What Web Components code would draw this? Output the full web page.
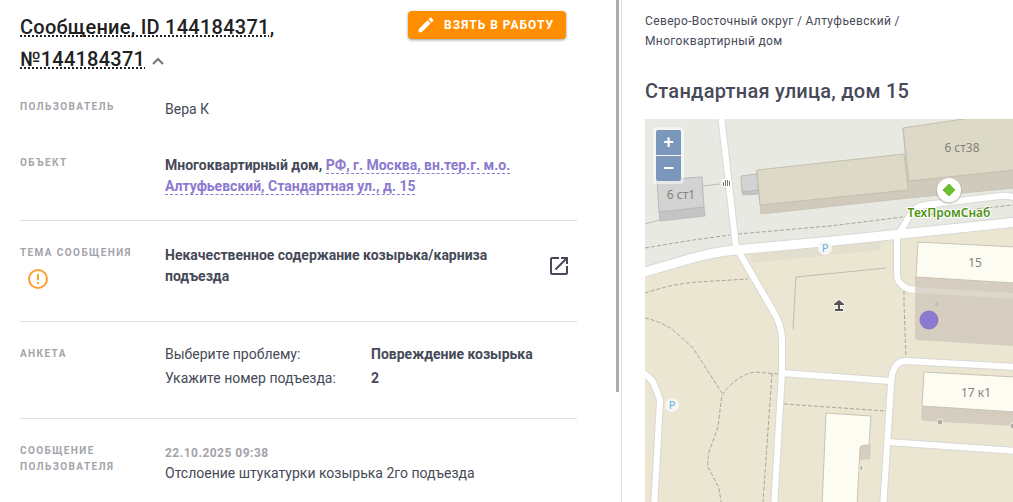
<!DOCTYPE html>
<html lang="ru">
<head>
<meta charset="utf-8">
<meta name="viewport" content="width=device-width, initial-scale=1">
<title>Сообщение, ID 144184371</title>
<style>
    body {
        margin: 0;
        font-family: Roboto, "Liberation Sans", sans-serif;
        font-size: 14px;
        line-height: 21px;
        color: #464a58;
        background: #fff;
    }
</style>
</head>
<body>
<message-page>
    <message-details slot="main"></message-details>
    <object-panel slot="side"></object-panel>
</message-page>

<script>
class MessagePage extends HTMLElement {
    connectedCallback() {
        this.attachShadow({ mode: 'open' });
        this.shadowRoot.innerHTML = `
            <style>
                :host {
                    display: grid;
                    grid-template-columns: minmax(0, 35fr) minmax(0, 22fr);
                    height: 100vh;
                    overflow: hidden;
                }

                main {
                    display: flex;
                    min-height: 0;
                    border-right: 1px solid #e0e0e0;
                }

                .scroll {
                    flex: 1;
                    overflow: auto;
                    scrollbar-width: none;
                }

                .track {
                    width: 3px;
                    margin-right: 2px;
                }

                .thumb {
                    height: 78%;
                    background: #acacb1;
                }

                aside {
                    min-height: 0;
                    overflow: hidden;
                }
            </style>
            <main>
                <div class="scroll"><slot name="main"></slot></div>
                <div class="track"><div class="thumb"></div></div>
            </main>
            <aside><slot name="side"></slot></aside>
        `;
    }
}

class ActionButton extends HTMLElement {
    connectedCallback() {
        this.attachShadow({ mode: 'open' });
        this.shadowRoot.innerHTML = `
            <style>
                :host {
                    display: block;
                    flex: none;
                }

                button {
                    display: flex;
                    align-items: center;
                    gap: 8px;
                    height: 28px;
                    padding: 0 12px 0 8px;
                    border: none;
                    border-radius: 4px;
                    background: #ff8f00;
                    color: #fff;
                    font: 700 12px/28px Roboto, "Liberation Sans", sans-serif;
                    letter-spacing: 1px;
                    text-transform: uppercase;
                    box-shadow: 0 1px 3px rgba(0, 0, 0, 0.4);
                    cursor: pointer;
                }
            </style>
            <button type="button">
                <svg width="20" height="18" viewBox="0 0 24 22" fill="#fff" aria-hidden="true">
                    <path d="M3 16.25V20h3.750L17.810 8.940l-3.750-3.750L3 16.250zM20.710 6.040c.39-.39.39-1.020 0-1.410l-2.340-2.340a.996.996 0 0 0-1.410 0l-1.830 1.830 3.750 3.750 1.830-1.830z"/>
                </svg>
                <slot></slot>
            </button>
        `;
    }
}

class DetailRow extends HTMLElement {
    connectedCallback() {
        const label = this.getAttribute('label');

        this.attachShadow({ mode: 'open' });
        this.shadowRoot.innerHTML = `
            <style>
                :host {
                    display: grid;
                    grid-template-columns: 145px minmax(0, 1fr);
                    padding-bottom: 23px;
                }

                :host([divided]) {
                    padding-top: 24px;
                    padding-bottom: 30px;
                    border-top: 1px solid #dfdfe0;
                }

                .label {
                    color: #a3a4aa;
                    font-size: 10px;
                    font-weight: 700;
                    line-height: 16px;
                    letter-spacing: 0.14em;
                    text-transform: uppercase;
                }
            </style>
            <div>
                <div class="label">${label}</div>
                <slot name="icon"></slot>
            </div>
            <div><slot></slot></div>
        `;
    }
}

class MessageDetails extends HTMLElement {
    connectedCallback() {
        this.attachShadow({ mode: 'open' });
        this.shadowRoot.innerHTML = `
            <style>
                :host {
                    display: block;
                    padding: 11px 39px 24px 20px;
                }

                header {
                    display: flex;
                    align-items: flex-start;
                    justify-content: space-between;
                    gap: 24px;
                    padding-right: 11px;
                    margin-bottom: 24px;
                }

                h1 {
                    margin: 0;
                    color: #212121;
                    font-size: 20px;
                    font-weight: 500;
                    line-height: 32px;
                    letter-spacing: 0.0125em;
                }

                abbr {
                    text-decoration: underline dotted;
                    text-decoration-skip-ink: none;
                }

                .toggle {
                    padding: 0;
                    border: none;
                    background: none;
                    cursor: pointer;
                }

                detail-row.user {
                    padding-bottom: 35px;
                }

                strong {
                    font-weight: 700;
                }

                a {
                    color: #8c79d0;
                    text-decoration: none;
                    border-bottom: 1px dashed #8c79d0;
                }

                .theme {
                    display: flex;
                    align-items: center;
                    justify-content: space-between;
                }

                .open {
                    flex: none;
                    width: 36px;
                    height: 36px;
                    padding: 6px;
                    border: none;
                    background: none;
                    cursor: pointer;
                }

                svg {
                    display: block;
                }

                .toggle svg {
                    display: inline-block;
                }

                .warning {
                    margin: 6px 0 0 6px;
                }

                dl {
                    display: grid;
                    grid-template-columns: 1fr 1fr;
                    row-gap: 8px;
                    margin: 0 0 2px;
                    line-height: 16px;
                }

                dd {
                    margin: 0;
                    font-weight: 700;
                }

                time {
                    display: block;
                    color: #a3a4aa;
                    font-size: 12px;
                    font-weight: 700;
                    line-height: 20px;
                    letter-spacing: 0.04em;
                }

                p {
                    margin: 0;
                }
            </style>
            <header>
                <h1>
                    <abbr>Сообщение, ID 144184371</abbr>, <abbr>№144184371</abbr>
                    <button class="toggle" type="button" aria-label="Свернуть">
                        <svg width="16" height="12" viewBox="0 0 16 12" fill="none" stroke="#757575" stroke-width="2" aria-hidden="true"><path d="M3 10l5-5 5 5"/></svg>
                    </button>
                </h1>
                <action-button>Взять в работу</action-button>
            </header>
            <detail-row class="user" label="Пользователь">Вера К</detail-row>
            <detail-row label="Объект">
                <strong>Многоквартирный дом,</strong>
                <strong><a href="#object">РФ, г. Москва, вн.тер.г. м.о. Алтуфьевский, Стандартная ул., д. 15</a></strong>
            </detail-row>
            <detail-row label="Тема сообщения" divided>
                <svg slot="icon" class="warning" width="24" height="24" viewBox="0 0 24 24" fill="#ff9d2e" aria-hidden="true">
                    <path d="M11 15h2v2h-2zm0-8h2v6h-2zm1-5a10 10 0 1 0 0 20 10 10 0 0 0 0-20zm0 18a8 8 0 1 1 0-16 8 8 0 0 1 0 16z"/>
                </svg>
                <div class="theme">
                    <strong>Некачественное содержание козырька/карниза подъезда</strong>
                    <button class="open" type="button" aria-label="Открыть">
                        <svg width="24" height="24" viewBox="0 0 24 24" fill="#464a58" aria-hidden="true"><path d="M19 19H5V5h7V3H5a2 2 0 0 0-2 2v14a2 2 0 0 0 2 2h14c1.100 0 2-.9 2-2v-7h-2v7zM14 3v2h3.590l-9.830 9.830 1.410 1.410L19 6.410V10h2V3h-7z"/></svg>
                    </button>
                </div>
            </detail-row>
            <detail-row label="Анкета" divided>
                <dl>
                    <dt>Выберите проблему:</dt>
                    <dd>Повреждение козырька</dd>
                    <dt>Укажите номер подъезда:</dt>
                    <dd>2</dd>
                </dl>
            </detail-row>
            <detail-row label="Сообщение пользователя" divided>
                <time datetime="2025-10-22T09:38">22.10.2025 09:38</time>
                <p>Отслоение штукатурки козырька 2го подъезда</p>
            </detail-row>
        `;
    }
}

class ObjectPanel extends HTMLElement {
    connectedCallback() {
        this.attachShadow({ mode: 'open' });
        this.shadowRoot.innerHTML = `
            <style>
                :host {
                    display: flex;
                    flex-direction: column;
                    height: 100%;
                    box-sizing: border-box;
                    padding: 11px 0 0 23px;
                }

                nav {
                    font-size: 12px;
                    line-height: 20px;
                    letter-spacing: 0.03em;
                    padding-right: 24px;
                }

                nav a {
                    color: inherit;
                    text-decoration: none;
                }

                h2 {
                    margin: 24px 0 12px;
                    font-size: 20px;
                    font-weight: 500;
                    line-height: 32px;
                    letter-spacing: 0.0125em;
                }

                object-map {
                    flex: 1;
                }
            </style>
            <nav>
                <a href="#okrug">Северо-Восточный округ</a> / <a href="#district">Алтуфьевский</a> / <a href="#type">Многоквартирный дом</a>
            </nav>
            <h2>Стандартная улица, дом 15</h2>
            <object-map></object-map>
        `;
    }
}

class ObjectMap extends HTMLElement {
    connectedCallback() {
        const roads = [
            { width: 6, d: 'M76 -4L91 128L127 190Q137 206 137 221V253L129 390' },
            { width: 9, d: 'M-4 154L48 139Q70 133 90 131L178 123L372 103' },
            { width: 6, d: 'M252 118L265 96Q269 88 280 86L355 77Q362 76 372 79' },
            { width: 6, d: 'M252 116V156Q252 161 256 165Q261 171 272 171' },
            { width: 6, d: 'M137 254L245 262' },
            { width: 6, d: 'M238 390L246 265Q247 242 261 242L372 248' },
            { width: 6, d: 'M243 323L372 332' },
            { width: 6, d: 'M-4 253Q6 258 9 265L15 281L9 390' }
        ];
        const paths = [
            'M0 129Q24 125 48 121L85 116M93 115L185 107L258 98M278 96L368 86',
            'M0 174Q12 170 25 167Q40 164 52 163L103 160',
            'M0 199Q14 202 27 210L48 229L77 274',
            'M133 255L110 253Q98 255 88 264Q76 274 76 283L73 308L64 333Q62 344 63 348L74 369L76 383',
            'M127 254L118 383',
            'M139 285L241 292',
            'M259 172V186L261 238'
        ];

        this.attachShadow({ mode: 'open' });
        this.shadowRoot.innerHTML = `
            <style>
                :host {
                    display: block;
                    position: relative;
                    min-height: 0;
                    overflow: hidden;
                    background: #ebe6d2;
                }

                .canvas {
                    display: block;
                    width: 100%;
                    height: 100%;
                }

                text {
                    font-family: "Noto Sans", "Open Sans", sans-serif;
                    font-size: 12px;
                    text-anchor: middle;
                    fill: #86827b;
                }

                .shop {
                    font-weight: 600;
                    fill: #4f9212;
                    stroke: #fff;
                    stroke-width: 2px;
                    paint-order: stroke;
                }

                .parking {
                    font-size: 11px;
                    fill: #62b2ea;
                }

                .zoom {
                    position: absolute;
                    top: 8px;
                    left: 8px;
                    display: flex;
                    flex-direction: column;
                    gap: 1px;
                    padding: 3px;
                    border-radius: 4px;
                    background: rgba(255, 255, 255, 0.5);
                }

                .zoom button {
                    display: grid;
                    place-items: center;
                    width: 25px;
                    height: 25px;
                    padding: 0;
                    border: none;
                    border-radius: 2px 2px 0 0;
                    background: #7b98bc;
                    color: #fff;
                    font: 700 18px/25px "Liberation Sans", sans-serif;
                    cursor: pointer;
                }

                .zoom button:last-child {
                    border-radius: 0 0 2px 2px;
                }
            </style>
            <svg class="canvas" role="img" aria-label="Карта">
                <!-- industrial zone -->
                <path fill="#e9e9e3" d="M0 0H2000V-60L368 103L178 123L90 131L48 138L0 153z"/>
                <path fill="#e3dfce" d="M106 135L235 122L236 131L107 144z"/>

                <g fill="none" stroke="#a8a59a" stroke-dasharray="4 2">
                    ${paths.map(d => `<path d="${d}"/>`).join('')}
                </g>
                <path fill="none" stroke="#bfbcb2" d="M58 67L75 65M0 105L15 101M148 210L151 158L241 149"/>

                <g fill="none" stroke="#d9d8d4" stroke-linejoin="round">
                    ${roads.map(r => `<path stroke-width="${r.width + 2}" d="${r.d}"/>`).join('')}
                </g>
                <g fill="none" stroke="#fff" stroke-linejoin="round">
                    ${roads.map(r => `<path stroke-width="${r.width}" d="${r.d}"/>`).join('')}
                </g>

                <!-- industrial buildings -->
                <g stroke-linejoin="round">
                    <path fill="#c4c4c4" stroke="#bdbdbd" d="M14 92L59 88L60 97L15 102z"/>
                    <path fill="#d3d3d3" stroke="#b9b9b7" d="M12 61L57 58L59 88L14 93z"/>
                    <path fill="#c4c4c4" stroke="#bdbdbd" d="M97 72L113 71L114 75L98 76z"/>
                    <path fill="#d3d3d3" stroke="#b9b9b7" d="M96 57L112 55L113 71L97 73z"/>
                    <path fill="#cfcabb" stroke="#cbc6b6" d="M112 52L115 86L263 71L264 79L116 95z"/>
                    <path fill="#dcd9c7" stroke="#c3bfaf" d="M112 51L259 35L263 71L115 86z"/>
                    <path fill="#cfcabb" stroke="#cbc6b6" d="M258 9L264 62L370 51V69L264 79z"/>
                    <path fill="#dcd9c7" stroke="#c3bfaf" d="M258 9L325 -1H370V51L264 62z"/>
                </g>

                <!-- dwelling houses -->
                <path fill="#d5cdbf" d="M270 158L368 163V227L273 221Q270 221 270 218z"/>
                <path fill="none" stroke="#dcd6cb" stroke-width="6" d="M270 171L368 177"/>
                <path fill="#fcfcf3" stroke="#c9c3b4" d="M273 123L370 128V164L271 158z"/>
                <path fill="#d5cdbf" d="M277 286L368 292V307L279 302Q276 301 276 298z"/>
                <path fill="#fcfcf3" stroke="#c9c3b4" d="M279 253L370 258V293L277 287z"/>
                <path fill="#d5cdbf" d="M214 326H226L225 340L214 341z"/>
                <path fill="#fcfcf3" stroke="#c9c3b4" stroke-linejoin="round" d="M181 294L226 297L224 326Q215 326 215 329L212 388H177z"/>

                <g fill="#b3ada0" stroke="#f4f1e6">
                    <circle cx="295" cy="303" r="3"/>
                    <circle cx="368" cy="307" r="3"/>
                    <path d="M215 346a3 3 0 0 1 0 6z"/>
                </g>
                <circle cx="292" cy="185" r="2" fill="#c5beb1"/>

                <!-- gate -->
                <rect x="77" y="60" width="10" height="8" rx="2" fill="#fff"/>
                <path fill="none" stroke="#77716b" d="M78.500 63v4M80.500 61v6M82.500 61v6M84.500 62v5"/>

                <!-- gazebo -->
                <path fill="#555" stroke="#f6f3e8" stroke-width="2" paint-order="stroke" d="M194 181L199 185V186H195V190H198V192H190V190H193V186H189V185z"/>

                <circle cx="180" cy="129" r="7" fill="#f7f6f1"/>
                <text class="parking" x="180" y="133">P</text>
                <circle cx="27" cy="286" r="7" fill="#f7f6f1"/>
                <text class="parking" x="27" y="290">P</text>

                <circle cx="304" cy="72" r="13" fill="#aaa59a" opacity="0.5"/>
                <circle cx="304" cy="71" r="12" fill="#fff"/>
                <path fill="#6cc030" stroke="#6cc030" stroke-linejoin="round" d="M304 65L310 71L304 77L298 71z"/>

                <circle cx="284" cy="201" r="9" fill="#8c79d0" stroke="#8673ca"/>

                <text x="36" y="80">6 ст1</text>
                <text x="317" y="33">6 ст38</text>
                <text x="330" y="148">15</text>
                <text x="331" y="278">17 к1</text>
                <text class="shop" x="304" y="98">ТехПромСнаб</text>
            </svg>
            <div class="zoom">
                <button type="button" aria-label="Приблизить">+</button>
                <button type="button" aria-label="Отдалить">−</button>
            </div>
        `;
    }
}

customElements.define('message-page', MessagePage);
customElements.define('action-button', ActionButton);
customElements.define('detail-row', DetailRow);
customElements.define('message-details', MessageDetails);
customElements.define('object-map', ObjectMap);
customElements.define('object-panel', ObjectPanel);
</script>
</body>
</html>
